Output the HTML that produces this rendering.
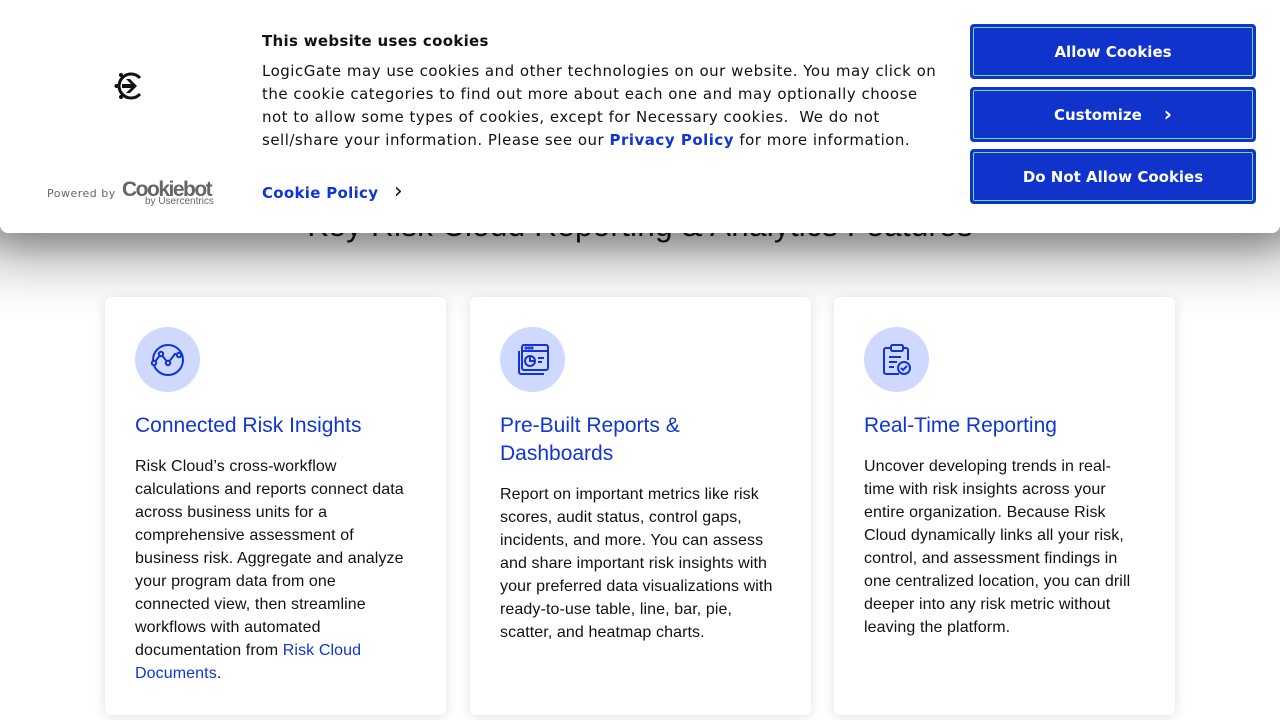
<!DOCTYPE html>
<html><head><meta charset="utf-8"><style>
*{margin:0;padding:0;box-sizing:border-box}
body{width:1280px;height:720px;overflow:hidden;background:#fff;position:relative;font-family:"DejaVu Sans","Liberation Sans",sans-serif}
.shade{position:absolute;left:0;top:0;width:1280px;height:320px;background:linear-gradient(#bdbdbd 233px,#e6e6e6 262px,#fafafa 300px,#fff 320px)}
.h2{position:absolute;top:207px;left:0;width:1280px;text-align:center;font:31.5px "Liberation Sans",sans-serif;color:#111;letter-spacing:.2px}
.banner{position:absolute;left:0;top:0;width:1280px;height:233px;background:#fff;border-radius:0 0 8px 8px;box-shadow:0 20px 40px rgba(0,0,0,.25)}
.card{position:absolute;top:297px;width:341px;height:418px;background:#fff;border-radius:6px;box-shadow:0 2px 12px rgba(0,0,0,.12)}
.ic{position:absolute;left:30px;top:30px;width:65px;height:65px;border-radius:50%;background:#cfd9ff}
.ic svg{position:absolute;left:16px;top:16px}
.t{position:absolute;left:30px;top:115px;font:21px/28px "Liberation Sans",sans-serif;color:#1034d6}
.p{position:absolute;left:30px;font:16px/23px "Liberation Sans",sans-serif;color:#111;white-space:nowrap;letter-spacing:.1px}
.p a{color:#1034d6;text-decoration:none}
.btn{position:absolute;left:970px;width:286px;height:55px;background:#1033cc;border:2px solid #1033cc;border-radius:4px;color:#fff;font-weight:bold;font-size:15px;display:flex;align-items:center;justify-content:center}
.btn::after{content:"";position:absolute;inset:1px;border:1px solid #6fe08f;border-radius:2px}
</style></head><body>
<div class="shade"></div>
<div class="h2">Key Risk Cloud Reporting &amp; Analytics Features</div>

<div class="card" style="left:105px">
<div class="ic"><svg width="34" height="34" viewBox="0 0 34 34" fill="none" stroke="#1034d6" stroke-width="2"><circle cx="17" cy="17" r="15"/><polyline points="3,20 10,11 17,20 24,11 29,12"/><circle cx="3" cy="20" r="2.2" fill="#cfd9ff"/><circle cx="10" cy="11" r="2.2" fill="#cfd9ff"/><circle cx="17" cy="20" r="2.2" fill="#cfd9ff"/><circle cx="28" cy="12" r="2.2" fill="#cfd9ff"/></svg></div>
<div class="t">Connected Risk Insights</div>
<div class="p" style="top:158px">Risk Cloud’s cross-workflow<br>calculations and reports connect data<br>across business units for a<br>comprehensive assessment of<br>business risk. Aggregate and analyze<br>your program data from one<br>connected view, then streamline<br>workflows with automated<br>documentation from <a>Risk Cloud</a><br><a>Documents</a>.</div>
</div>

<div class="card" style="left:470px">
<div class="ic"><svg width="34" height="34" viewBox="0 0 34 34" fill="none" stroke="#1034d6" stroke-width="2"><rect x="6" y="2" width="26" height="25" rx="2"/><path d="M3 8v21a2 2 0 0 0 2 2h23"/><line x1="6" y1="8" x2="32" y2="8"/><circle cx="10" cy="5" r=".6"/><circle cx="13" cy="5" r=".6"/><circle cx="16" cy="5" r=".6"/><circle cx="14" cy="18" r="5"/><path d="M14 13v5h5"/><line x1="22" y1="15" x2="28" y2="15"/><line x1="22" y1="19" x2="26" y2="19"/></svg></div>
<div class="t">Pre-Built Reports &amp;<br>Dashboards</div>
<div class="p" style="top:186px">Report on important metrics like risk<br>scores, audit status, control gaps,<br>incidents, and more. You can assess<br>and share important risk insights with<br>your preferred data visualizations with<br>ready-to-use table, line, bar, pie,<br>scatter, and heatmap charts.</div>
</div>

<div class="card" style="left:834px">
<div class="ic"><svg width="34" height="34" viewBox="0 0 34 34" fill="none" stroke="#1034d6" stroke-width="2"><path d="M11 5H6a2 2 0 0 0-2 2v22a2 2 0 0 0 2 2h13"/><path d="M23 5h3a2 2 0 0 1 2 2v10"/><rect x="11" y="2" width="12" height="6" rx="1.5"/><line x1="9" y1="14" x2="21" y2="14"/><line x1="9" y1="19" x2="17" y2="19"/><line x1="9" y1="24" x2="14" y2="24"/><circle cx="24" cy="25" r="6"/><path d="M21 25l2 2 4-4"/></svg></div>
<div class="t">Real-Time Reporting</div>
<div class="p" style="top:158px">Uncover developing trends in real-<br>time with risk insights across your<br>entire organization. Because Risk<br>Cloud dynamically links all your risk,<br>control, and assessment findings in<br>one centralized location, you can drill<br>deeper into any risk metric without<br>leaving the platform.</div>
</div>

<div class="banner">
<svg style="position:absolute;left:113px;top:70px" width="32" height="32" viewBox="0 0 32 32"><path d="M27 8A12 12 0 1 0 27 24" fill="none" stroke="#111" stroke-width="3"/><circle cx="3.5" cy="16" r="2" fill="#111"/><circle cx="8" cy="5" r="2" fill="#111"/><circle cx="8" cy="27" r="2" fill="#111"/><path d="M9 14h9l-5-5h4l7 7-7 7h-4l5-5H9z" fill="#111"/></svg>
<div style="position:absolute;left:47px;top:187px;font-size:11px;color:#666;letter-spacing:.5px">Powered by</div>
<div style="position:absolute;left:122px;top:178px;font:bold 21px 'Liberation Sans',sans-serif;color:#666;letter-spacing:-1.5px">Cookiebot</div>
<div style="position:absolute;left:145px;top:196px;font:10px 'Liberation Sans',sans-serif;color:#666">by Usercentrics</div>
<div style="position:absolute;left:262px;top:32px;font-weight:bold;font-size:15px;color:#111;letter-spacing:.3px">This website uses cookies</div>
<div style="position:absolute;left:262px;top:60px;font-size:15px;line-height:23px;color:#111;letter-spacing:.5px;white-space:nowrap">LogicGate may use cookies and other technologies on our website. You may click on<br>the cookie categories to find out more about each one and may optionally choose<br>not to allow some types of cookies, except for Necessary cookies.&nbsp; We do not<br>sell/share your information. Please see our <b style="color:#1034d6">Privacy Policy</b> for more information.</div>
<div style="position:absolute;left:262px;top:184px;font-weight:bold;font-size:15px;color:#1034d6;letter-spacing:.3px">Cookie Policy <span style="margin-left:10px;color:#111;font-size:22px;line-height:15px;font-weight:normal">›</span></div>
<div class="btn" style="top:24px">Allow Cookies</div>
<div class="btn" style="top:87px">Customize <span style="margin-left:22px;font-size:20px;line-height:15px">›</span></div>
<div class="btn" style="top:149px">Do Not Allow Cookies</div>
</div>
</body></html>
